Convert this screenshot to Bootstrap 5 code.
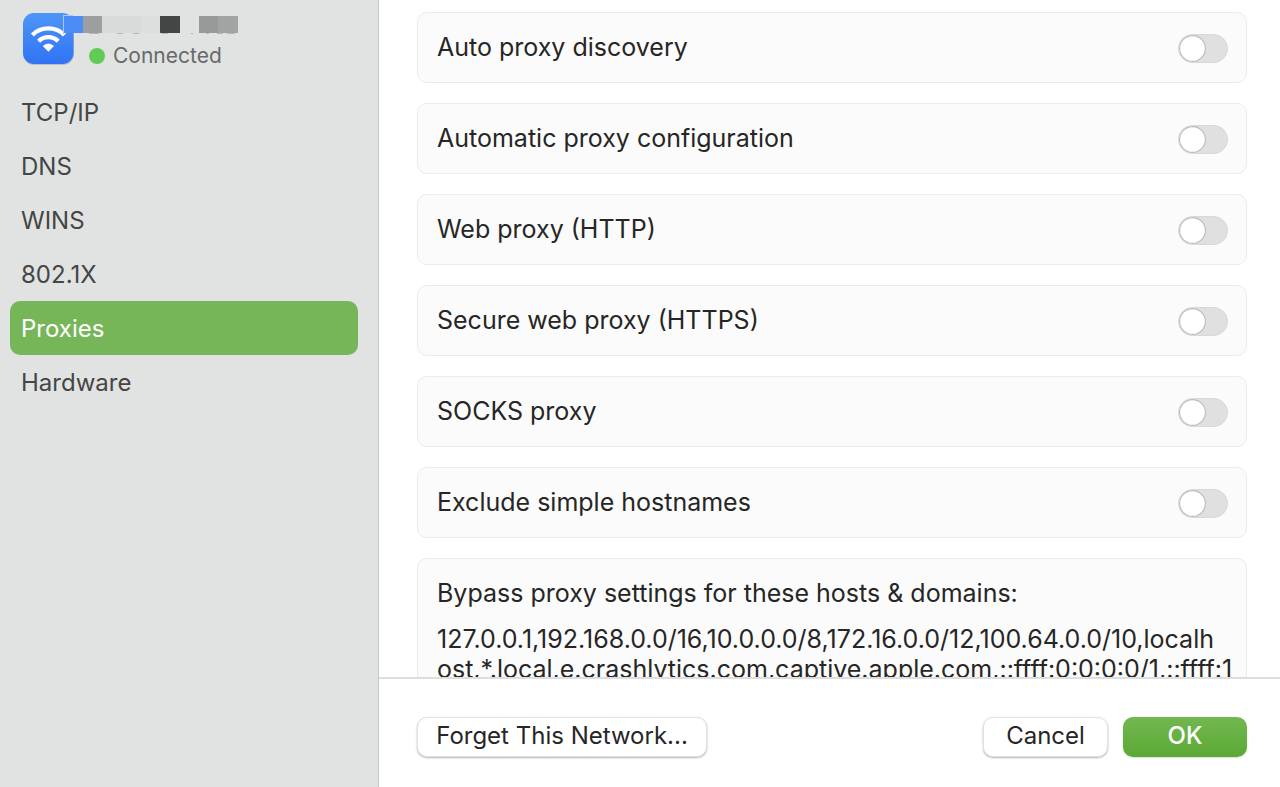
<!DOCTYPE html>
<html lang="en">
<head>
<meta charset="utf-8">
<meta name="viewport" content="width=device-width, initial-scale=1">
<title>Network Settings – Proxies</title>
<link rel="stylesheet" href="https://cdn.jsdelivr.net/npm/bootstrap@5.3.0/dist/css/bootstrap.min.css">
<style>
  body { font-family: Inter, "Liberation Sans", sans-serif; font-size: 24px; line-height: 30px; color: #262626; background: #fff; }
  .side-pane { flex: 0 0 379px; background: #e1e3e2; border-right: 1px solid #c6c8c7; padding: 13px 20px 0 10px; }
  .net-head { height: 72px; padding-left: 12px; gap: 15px; }
  .wifi-icon { width: 52px; height: 52px; }
  .mosaic { left: 53px; top: 2px; width: 176px; height: 19px; }
  .net-status { font-size: 21px; line-height: 26px; color: #686a69; padding-top: 30px; gap: 8px; }
  .status-dot { width: 16px; height: 16px; background: #62cb55; }
  .side-menu .nav-link { height: 54px; padding: 2px 12px 0 11px; color: #444645; border-radius: 10px; display: flex; align-items: center; }
  .side-menu .nav-link.active { background: #77b658; color: #fff; }
  .main-pane { min-width: 0; }
  .settings-scroll { min-height: 0; padding: 12px 33px 0 38px; gap: 20px; font-size: 25px; }
  .setting { flex: none; background: #fbfbfb; border: 1px solid #ebebeb; border-radius: 10px; padding: 0 18px 2px 19px; }
  .setting-toggle { height: 71px; }
  .form-switch .form-check-input.toggle { width: 50px; height: 29px; margin: 4px 0 0; border: 1px solid #d8d8d8; background-color: #e0e0e0;
    background-image: url("data:image/svg+xml,%3Csvg xmlns='http://www.w3.org/2000/svg' viewBox='0 0 28 28'%3E%3Ccircle cx='14' cy='14' r='13.4' fill='%23fff' stroke='%23bdbdbd' stroke-width='1.2'/%3E%3C/svg%3E"); }
  .form-switch .form-check-input.toggle:checked { background-color: #67b044; }
  .bypass { padding-top: 19px; padding-right: 9px; }
  .bypass textarea { resize: none; height: 160px; margin-top: 16px; padding: 0; border: 0; background: none; color: inherit; line-height: 30px; white-space: pre; overflow: hidden; }
  .foot-bar { flex: 0 0 110px; border-top: 2px solid #dedede; padding: 38px 33px 0 38px; gap: 15px; background: #fff; }
  .foot-bar .btn { height: 40px; padding: 0; font-size: 24px; line-height: 36px; padding-bottom: 2px; border-radius: 10px; border: 1px solid #e2e2e2; box-shadow: 0 1px 2px #0000004d; color: #262626; background: #fff; }
  .foot-bar .btn-forget { width: 290px; }
  .foot-bar .btn-short { width: 125px; }
  .foot-bar .btn-ok { width: 124px; border-color: transparent; color: #fff; font-weight: 500; background: linear-gradient(#72b750, #5ba935) border-box; box-shadow: 0 1px 2px #00000026; }
</style>
</head>
<body>
<div class="d-flex vh-100 overflow-hidden">
  <aside class="side-pane">
    <header class="net-head d-flex align-items-start position-relative">
      <svg class="wifi-icon" viewBox="0 0 52 52" role="img" aria-label="Wi-Fi">
        <defs><linearGradient id="sky" x1="0" y1="0" x2="0" y2="1"><stop offset="0" stop-color="#4e95f8"/><stop offset="1" stop-color="#3173f3"/></linearGradient></defs>
        <rect x="1" y="1" width="51" height="51" rx="11" fill="#b9c0cc"/>
        <rect x="1" y="0" width="50.500" height="51" rx="11" fill="url(#sky)"/>
        <g fill="none" stroke="#fff" stroke-width="4.300">
          <path d="M10.300 22a23 23 0 0 1 32.200 0"/>
          <path d="M16.600 28.200a14 14 0 0 1 19.600 0"/>
        </g>
        <path d="M26.400 38.700l-5.600-5.700q5.600-5 11.200 0z" fill="#fff"/>
      </svg>
      <svg class="mosaic position-absolute" viewBox="0 -1 176 19" shape-rendering="crispEdges" aria-hidden="true">
        <path fill="#a9c9f8" d="M0-1h10v1H1v18H0z"/>
        <path fill="#4b8cf6" d="M1 0h19v17H1z"/>
        <path fill="#9d9f9e" d="M20 0h19v17H20z"/>
        <path fill="#d9dbda" d="M39 0h39v17H39z"/>
        <path fill="#dddfde" d="M78 0h19v17H78z"/>
        <path fill="#444645" d="M97 0h20v17H97z"/>
        <path fill="#e1e3e2" d="M117 0h19v17h-19z"/>
        <path fill="#989a99" d="M136 0h19v17h-19z"/>
        <path fill="#a2a4a3" d="M155 0h20v17h-20z"/>
        <path fill="#b4b6b5" d="M26 17h10v1H26zM54 17h6v1h-6zM70 17h6v1h-6zM99 17h6v1h-6zM128 17h2v1h-2zM143 17h3v1h-3zM154 17h6v1h-6zM164 17h8v1h-8z"/>
      </svg>
      <div class="net-status d-flex align-items-center"><span class="status-dot rounded-circle"></span>Connected</div>
    </header>
    <nav class="side-menu nav flex-column">
      <a class="nav-link" href="#">TCP/IP</a>
      <a class="nav-link" href="#">DNS</a>
      <a class="nav-link" href="#">WINS</a>
      <a class="nav-link" href="#">802.1X</a>
      <a class="nav-link active" href="#" aria-current="page">Proxies</a>
      <a class="nav-link" href="#">Hardware</a>
    </nav>
  </aside>

  <main class="main-pane d-flex flex-column flex-grow-1">
    <div class="settings-scroll d-flex flex-column flex-grow-1 overflow-hidden">
      <div class="setting setting-toggle form-switch d-flex align-items-center justify-content-between">
        <label for="auto">Auto proxy discovery</label><input class="form-check-input toggle" type="checkbox" role="switch" id="auto">
      </div>
      <div class="setting setting-toggle form-switch d-flex align-items-center justify-content-between">
        <label for="pac">Automatic proxy configuration</label><input class="form-check-input toggle" type="checkbox" role="switch" id="pac">
      </div>
      <div class="setting setting-toggle form-switch d-flex align-items-center justify-content-between">
        <label for="http">Web proxy (HTTP)</label><input class="form-check-input toggle" type="checkbox" role="switch" id="http">
      </div>
      <div class="setting setting-toggle form-switch d-flex align-items-center justify-content-between">
        <label for="https">Secure web proxy (HTTPS)</label><input class="form-check-input toggle" type="checkbox" role="switch" id="https">
      </div>
      <div class="setting setting-toggle form-switch d-flex align-items-center justify-content-between">
        <label for="socks">SOCKS proxy</label><input class="form-check-input toggle" type="checkbox" role="switch" id="socks">
      </div>
      <div class="setting setting-toggle form-switch d-flex align-items-center justify-content-between">
        <label for="simple">Exclude simple hostnames</label><input class="form-check-input toggle" type="checkbox" role="switch" id="simple">
      </div>
      <div class="setting bypass">
        <label class="d-block" for="hosts">Bypass proxy settings for these hosts &amp; domains:</label>
        <textarea class="w-100 d-block" id="hosts" spellcheck="false">127.0.0.1,192.168.0.0/16,10.0.0.0/8,172.16.0.0/12,100.64.0.0/10,localh
ost,*.local,e.crashlytics.com,captive.apple.com,::ffff:0:0:0:0/1,::ffff:1</textarea>
      </div>
    </div>
    <footer class="foot-bar d-flex align-items-start">
      <button type="button" class="btn btn-forget me-auto">Forget This Network...</button>
      <button type="button" class="btn btn-short">Cancel</button>
      <button type="button" class="btn btn-short btn-ok">OK</button>
    </footer>
  </main>
</div>
<script src="https://cdn.jsdelivr.net/npm/bootstrap@5.3.0/dist/js/bootstrap.bundle.min.js"></script>
</body>
</html>
